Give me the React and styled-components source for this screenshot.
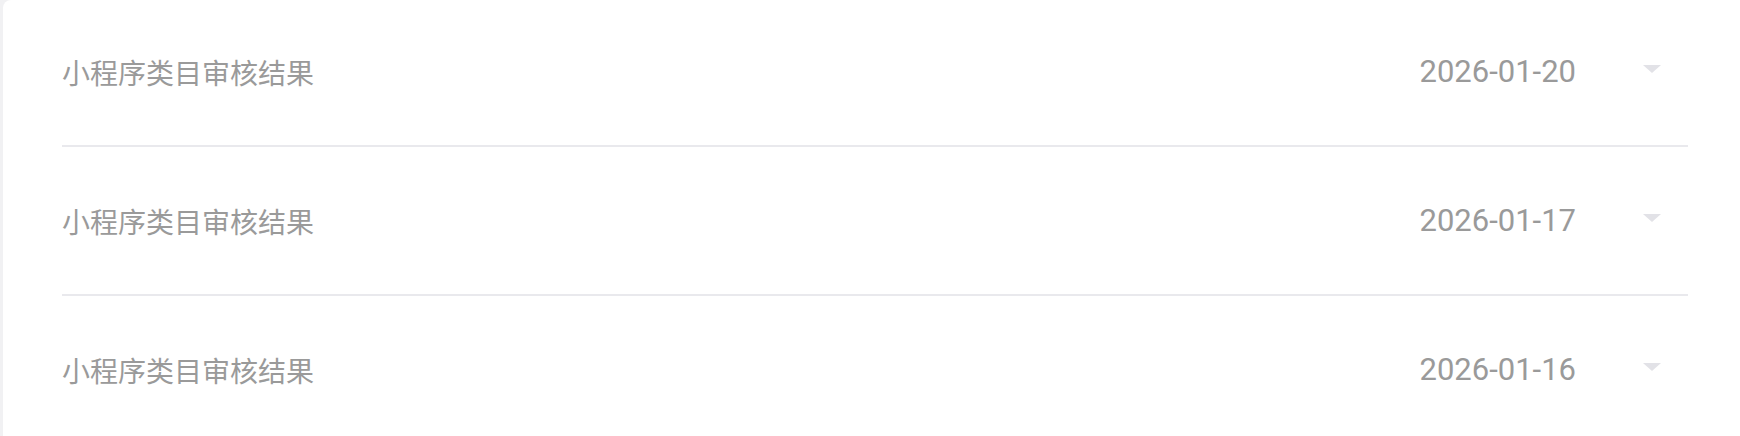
import styled, { createGlobalStyle } from "styled-components";

const GlobalStyle = createGlobalStyle`
    html, body {
        margin: 0;
        padding: 0;
        background: #f1f1f3;
        overflow: hidden;
    }
    body {
        font-family: "Noto Sans CJK SC", "Noto Sans", sans-serif;
    }
`;

const records = [
    { id: 1, title: "小程序类目审核结果", date: "2026-01-20" },
    { id: 2, title: "小程序类目审核结果", date: "2026-01-17" },
    { id: 3, title: "小程序类目审核结果", date: "2026-01-16" },
];

// faint account watermark tiled over the card
const markRows = [8, 100, 192, 284, 376];
const markCols = [-103, 329, 761, 1193, 1625];

const App = () => {
    return (
        <>
            <GlobalStyle />
            <Card>
                <Watermark>
                    {markRows.map((top) =>
                        markCols.map((left) => (
                            <Mark
                                key={`${top}-${left}`}
                                style={{ top: `${top}px`, left: `${left}px` }}
                            >
                                QWM35QLUSZr
                            </Mark>
                        ))
                    )}
                </Watermark>
                <List>
                    {records.map((item) => (
                        <Row key={item.id}>
                            <Title>{item.title}</Title>
                            <Meta>
                                <DateText>{item.date}</DateText>
                                <Caret />
                            </Meta>
                        </Row>
                    ))}
                </List>
            </Card>
        </>
    );
};

const Card = styled.div`
    position: relative;
    margin-left: 3px;
    height: 436px;
    background: #ffffff;
    border-top-left-radius: 8px;
    overflow: hidden;
`;

const Watermark = styled.div`
    position: absolute;
    inset: 0;
    pointer-events: none;
`;

const Mark = styled.span`
    position: absolute;
    font-family: "Liberation Sans", Arial, sans-serif;
    font-size: 28px;
    line-height: 28px;
    color: rgba(0, 0, 0, 0.018);
    white-space: nowrap;
`;

const List = styled.div`
    position: relative;
    margin-top: -2px;
    padding: 0 52px 0 59px;
`;

const Row = styled.div`
    display: flex;
    align-items: center;
    justify-content: space-between;
    height: 147px;
    border-bottom: 2px solid #e9e9ed;
    &:last-child {
        border-bottom: none;
    }
`;

const Title = styled.span`
    font-family: "Noto Sans CJK SC", sans-serif;
    font-size: 28px;
    color: #9a9a9a;
    line-height: 1;
`;

const Meta = styled.div`
    display: flex;
    align-items: center;
    gap: 67px;
    padding-right: 27px;
`;

const DateText = styled.span`
    font-family: Roboto, "Noto Sans CJK SC", sans-serif;
    font-size: 31px;
    color: #9a9a9a;
    line-height: 1;
`;

const Caret = styled.span`
    width: 0;
    height: 0;
    margin-bottom: 6px;
    border-left: 9px solid transparent;
    border-right: 9px solid transparent;
    border-top: 8px solid #e2e2e7;
`;

export default App;
